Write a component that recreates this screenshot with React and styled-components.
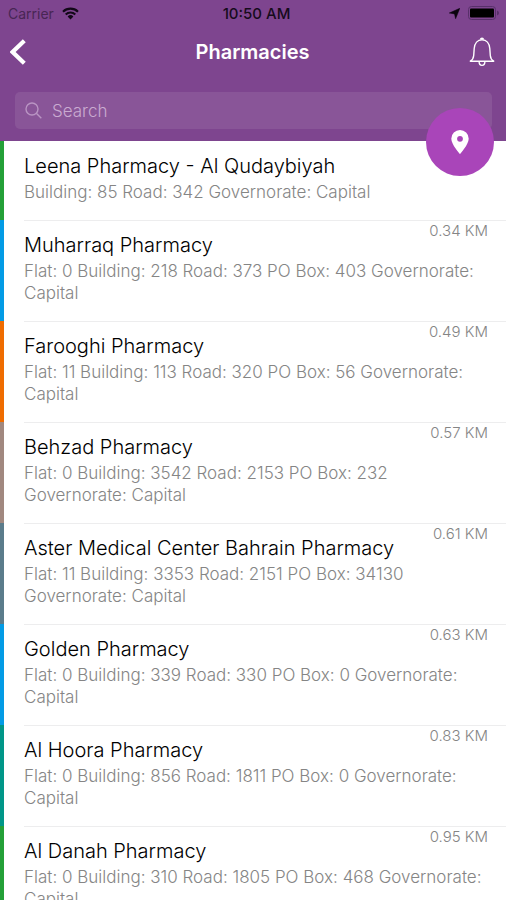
import React from "react";
import styled, { createGlobalStyle } from "styled-components";

const GlobalStyle = createGlobalStyle`
  *, *::before, *::after { box-sizing: border-box; }
  html, body, #root { height: 100%; }
  body {
    margin: 0;
    background: #fff;
    font-family: Inter, "Liberation Sans", sans-serif;
  }
  h1, h2, p, ul { margin: 0; padding: 0; }
`;

const Screen = styled.div`
  display: flex;
  flex-direction: column;
  height: 100vh;
  overflow: hidden;
`;

const Header = styled.header`
  position: relative;
  flex: none;
  background: #7e458f;
  padding-bottom: 12px;
`;

const StatusBar = styled.div`
  display: grid;
  grid-template-columns: 1fr auto 1fr;
  align-items: center;
  height: 26px;
  padding: 0 7px 0 8px;
  font-size: 14px;
  color: #160b1c;
`;

const StatusGroup = styled.div`
  display: flex;
  align-items: center;
  gap: 8px;
  justify-content: ${(p) => (p.$end ? "flex-end" : "flex-start")};
`;

const Carrier = styled.span`
  color: #482654;
`;

const Clock = styled.time`
  font-size: 15px;
  font-weight: 500;
  padding-left: 6px;
`;

const NavBar = styled.div`
  display: grid;
  grid-template-columns: 1fr auto 1fr;
  align-items: center;
  height: 52px;
  padding: 0 11px 0 10px;
`;

const PageTitle = styled.h1`
  font-size: 20px;
  line-height: 24px;
  font-weight: 600;
  color: #fff;
`;

const IconButton = styled.button`
  display: flex;
  border: 0;
  padding: 0;
  background: none;
  color: #fff;
  cursor: pointer;
  justify-self: ${(p) => (p.$end ? "end" : "start")};
`;

const SearchField = styled.label`
  display: flex;
  align-items: center;
  gap: 10px;
  height: 37px;
  margin: 14px 14px 0 15px;
  padding: 0 10px;
  border-radius: 5px;
  background: #895598;
  color: #b994c3;
`;

const SearchInput = styled.input`
  flex: 1;
  min-width: 0;
  border: 0;
  padding: 0;
  outline: 0;
  background: none;
  font: 300 17px/24px Inter, "Liberation Sans", sans-serif;
  color: #fff;
  &::placeholder { color: #c9abd1; opacity: 1; }
`;

const MapButton = styled.button`
  position: absolute;
  right: 12px;
  bottom: -35px;
  display: flex;
  align-items: center;
  justify-content: center;
  width: 68px;
  height: 68px;
  border: 0;
  border-radius: 50%;
  padding: 0;
  background: #a945b9;
  color: #fff;
  cursor: pointer;
`;

const List = styled.ul`
  flex: 1;
  min-height: 0;
  overflow: hidden;
  list-style: none;
`;

const Row = styled.li`
  padding-left: 20px;
  border-left: 4px solid ${(p) => p.$accent};
`;

const RowBody = styled.div`
  padding-bottom: 17px;
  padding-right: 18px;
  box-shadow: ${(p) => (p.$divided ? "inset 0 1px #ededee" : "none")};
`;

const RowTop = styled.div`
  display: flex;
  align-items: flex-start;
  justify-content: space-between;
`;

const Name = styled.h2`
  padding-top: 10px;
  font-size: 20px;
  line-height: 30px;
  font-weight: 300;
  color: #000;
`;

const Distance = styled.span`
  flex: none;
  font-size: 15px;
  line-height: 22px;
  font-weight: 300;
  color: #858585;
`;

const Address = styled.p`
  font-size: 17px;
  line-height: 22px;
  font-weight: 300;
  color: #858585;
`;

const pharmacies = [
  { name: "Leena Pharmacy - Al Qudaybiyah", address: "Building: 85 Road: 342 Governorate: Capital", accent: "#24a038" },
  { name: "Muharraq Pharmacy", address: "Flat: 0 Building: 218 Road: 373 PO Box: 403 Governorate: Capital", distance: "0.34 KM", accent: "#039be5" },
  { name: "Farooghi Pharmacy", address: "Flat: 11 Building: 113 Road: 320 PO Box: 56 Governorate: Capital", distance: "0.49 KM", accent: "#ef6c00" },
  { name: "Behzad Pharmacy", address: "Flat: 0 Building: 3542 Road: 2153 PO Box: 232 Governorate: Capital", distance: "0.57 KM", accent: "#a1887f" },
  { name: "Aster Medical Center Bahrain Pharmacy", address: "Flat: 11 Building: 3353 Road: 2151 PO Box: 34130 Governorate: Capital", distance: "0.61 KM", accent: "#5b7c8b" },
  { name: "Golden Pharmacy", address: "Flat: 0 Building: 339 Road: 330 PO Box: 0 Governorate: Capital", distance: "0.63 KM", accent: "#039be5" },
  { name: "Al Hoora Pharmacy", address: "Flat: 0 Building: 856 Road: 1811 PO Box: 0 Governorate: Capital", distance: "0.83 KM", accent: "#009688" },
  { name: "Al Danah Pharmacy", address: "Flat: 0 Building: 310 Road: 1805 PO Box: 468 Governorate: Capital", distance: "0.95 KM", accent: "#24a038" },
];

const WifiIcon = () => (
  <svg width="17" height="13" viewBox="0 0 17 13" fill="none" aria-hidden="true">
    <path d="M1 4.7a10.8 10.8 0 0 1 15 0M3.7 7.4a7 7 0 0 1 9.6 0" stroke="#120818" strokeWidth="2.1" />
    <path d="M8.5 12.4 5.6 9.5a4.2 4.2 0 0 1 5.8 0z" fill="#120818" />
  </svg>
);

const LocationIcon = () => (
  <svg width="11" height="11" viewBox="0 0 11 11" aria-hidden="true">
    <path d="M10.8.3 6.6 10.7 5.500 5.900.3 5z" fill="#0b040e" stroke="#0b040e" strokeWidth="0.500" />
  </svg>
);

const BatteryIcon = () => (
  <svg width="31" height="14" viewBox="0 0 31 14" aria-hidden="true">
    <rect x="0.5" y="0.5" width="27" height="13" rx="3" fill="none" stroke="#58306a" />
    <rect x="2" y="2.5" width="24" height="9" rx="1" fill="#000" />
    <path d="M29 4.5q2 .6 2 2.5t-2 2.5z" fill="#58306a" />
  </svg>
);

const BackIcon = () => (
  <svg width="16" height="26" viewBox="0 0 16 26" fill="none" aria-hidden="true">
    <path d="M14.3 1.7 2.6 13l11.7 11.3" stroke="currentColor" strokeWidth="4.200" />
  </svg>
);

const BellIcon = () => (
  <svg width="26" height="30" viewBox="0 0 26 30" fill="none" stroke="currentColor" strokeWidth="1.4" aria-hidden="true">
    <path d="M1.3 24.2h23.4c-2.2-1.3-3.2-3.2-3.4-5.7l-.5-7C20.4 6.3 17.4 2.7 13 2.7S5.6 6.3 5.2 11.5l-.5 7c-.2 2.5-1.200 4.400-3.400 5.700z" strokeLinejoin="round" />
    <path d="M11.6 2.6a1.4 1.4 0 0 1 2.8 0M10.1 24.6a2.9 3.8 0 0 0 5.8 0" />
  </svg>
);

const SearchIcon = () => (
  <svg width="17" height="17" viewBox="0 0 17 17" fill="none" stroke="currentColor" strokeWidth="1.4" aria-hidden="true">
    <circle cx="7" cy="7" r="6" />
    <path d="m11.3 11.3 5 5" />
  </svg>
);

const PinIcon = () => (
  <svg width="18" height="24" viewBox="0 0 18 24" aria-hidden="true">
    <path fillRule="evenodd" d="M9 0a8.7 8.7 0 0 0-8.7 8.7C.3 14.5 9 24 9 24s8.7-9.500 8.700-15.300A8.700 8.700 0 0 0 9 0zm0 5.900a2.900 2.900 0 1 1 0 5.800 2.900 2.900 0 0 1 0-5.800z" fill="currentColor" />
  </svg>
);

export default function App() {
  return (
    <Screen>
      <GlobalStyle />
      <Header>
        <StatusBar>
          <StatusGroup>
            <Carrier>Carrier</Carrier>
            <WifiIcon />
          </StatusGroup>
          <Clock>10:50 AM</Clock>
          <StatusGroup $end>
            <LocationIcon />
            <BatteryIcon />
          </StatusGroup>
        </StatusBar>
        <NavBar>
          <IconButton type="button" aria-label="Back"><BackIcon /></IconButton>
          <PageTitle>Pharmacies</PageTitle>
          <IconButton type="button" aria-label="Notifications" $end><BellIcon /></IconButton>
        </NavBar>
        <SearchField>
          <SearchIcon />
          <SearchInput type="search" placeholder="Search" aria-label="Search" />
        </SearchField>
        <MapButton type="button" aria-label="Show on map"><PinIcon /></MapButton>
      </Header>
      <List>
        {pharmacies.map((item, index) => (
          <Row key={item.name} $accent={item.accent}>
            <RowBody $divided={index > 0}>
              <RowTop>
                <Name>{item.name}</Name>
                {item.distance && <Distance>{item.distance}</Distance>}
              </RowTop>
              <Address>{item.address}</Address>
            </RowBody>
          </Row>
        ))}
      </List>
    </Screen>
  );
}
